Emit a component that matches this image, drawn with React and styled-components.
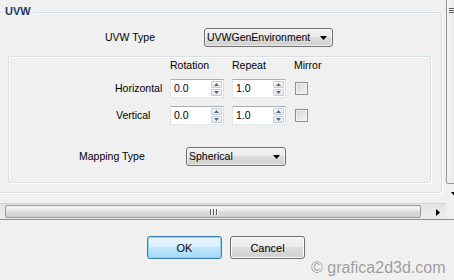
import React from "react";
import styled, { createGlobalStyle } from "styled-components";

const Global = createGlobalStyle`
  html, body { margin: 0; padding: 0; background: #f0f0f0; }
  body {
    font-family: "Liberation Sans", Arial, sans-serif;
    font-size: 10.5px;
    color: #000;
  }
  * { box-sizing: border-box; }
`;

const Window = styled.div`
  position: relative;
  width: 454px;
  height: 280px;
  overflow: hidden;
  background: #f0f0f0;
  display: flex;
  flex-direction: column;
`;

const ScrollPanel = styled.div`
  display: flex;
  flex-direction: column;
  height: 220px;
  border-bottom: 1px solid #8e8e8e;
`;

const Viewport = styled.div`
  display: flex;
  height: 203px;
`;

const Content = styled.div`
  flex: none;
  width: 446px;
  padding-top: 12px;
  overflow: hidden;
`;

const Group = styled.div`
  position: relative;
  margin-left: -4px;
  width: 446px;
  border: 1px solid #d5dfe5;
  border-radius: 3px;
  box-shadow: inset 1px 1px 0 #fff, 1px 1px 0 #fff;
  padding: 15px 10px 9px 11px;
`;

const GroupTitle = styled.span`
  position: absolute;
  top: -8px;
  left: 7px;
  padding: 0 3px 0 1px;
  background: #f0f0f0;
  font-weight: bold;
  font-size: 11px;
  line-height: 13px;
  color: #1d3a6e;
`;

const FieldRow = styled.div`
  display: grid;
  grid-template-columns: ${(p) => p.$labelWidth}px auto;
  justify-items: start;
  align-items: center;
  height: 19px;
  padding-left: ${(p) => p.$indent}px;
  margin-top: ${(p) => p.$top || 0}px;
`;

const Label = styled.span`
  line-height: 13px;
  white-space: nowrap;
`;

const Select = styled.div`
  display: flex;
  align-items: center;
  justify-content: space-between;
  width: ${(p) => p.$width}px;
  height: 19px;
  padding: 0 5px 0 2px;
  border: 1px solid #707070;
  border-radius: 3px;
  background: linear-gradient(#f2f2f2, #ebebeb 50%, #dddddd 50%, #cfcfcf);
  box-shadow: inset 0 0 0 1px rgba(255, 255, 255, 0.6);
  line-height: 17px;
  white-space: nowrap;
`;

const Frame = styled.div`
  margin-top: 9px;
  border: 1px solid #d5dfe5;
  border-radius: 3px;
  box-shadow: inset 1px 1px 0 #fff, 1px 1px 0 #fff;
  padding: 3px 0 16px 0;
`;

const AxisGrid = styled.div`
  display: grid;
  grid-template-columns: 153px 54px 54px auto;
  grid-template-rows: 11px 19px 19px;
  column-gap: 8px;
  row-gap: 8px;
  align-items: center;
  justify-items: start;
`;

const ColumnHead = styled.span`
  line-height: 13px;
  white-space: nowrap;
`;

const AxisLabel = styled.span`
  padding-left: ${(p) => p.$indent}px;
  line-height: 13px;
`;

const Spin = styled.div`
  display: flex;
  align-items: stretch;
  justify-content: space-between;
  width: 54px;
  height: 19px;
  padding: 1px 1px 1px 3px;
  background: #fff;
  border: 1px solid;
  border-color: #abadb3 #dbdfe6 #e3e9ef #e2e3ea;
`;

const SpinValue = styled.span`
  align-self: center;
  line-height: 13px;
`;

const SpinButtons = styled.div`
  display: flex;
  flex-direction: column;
  gap: 1px;
  width: 11px;
`;

const SpinButton = styled.div`
  flex: 1;
  display: flex;
  align-items: center;
  justify-content: center;
  border: 1px solid #c9cdd3;
  border-radius: 1px;
  background: linear-gradient(#f7f7f7, #e3e5e8);
`;

const Check = styled.div`
  width: 13px;
  height: 13px;
  margin-left: 1px;
  border: 1px solid #8f8f8f;
  background: linear-gradient(135deg, #cfd1d4, #f7f7f7);
  box-shadow: inset 0 0 0 1px #f2f2f2;
`;

const VScroll = styled.div`
  flex: none;
  width: 17px;
  display: flex;
  flex-direction: column;
`;

const VThumb = styled.div`
  flex: 1;
  border: 1px solid #979797;
  border-top: none;
  border-radius: 0 0 2px 2px;
  background: linear-gradient(90deg, #f5f5f5, #e9e9e9 45%, #dcdcdc 50%, #d0d0d0);
  padding: 8px 0 0 2px;
`;

const GripLine = styled.div`
  width: 9px;
  height: 1px;
  margin-bottom: 1px;
  background: #5a5a5a;
  box-shadow: 0 1px 0 #fafafa;
`;

const ArrowButton = styled.div`
  flex: none;
  width: 17px;
  height: ${(p) => p.$height || 17}px;
  display: flex;
  align-items: center;
  justify-content: center;
`;

const HScroll = styled.div`
  display: flex;
  height: 16px;
`;

const HTrack = styled.div`
  flex: none;
  width: 446px;
  display: flex;
  padding: 1px 0 1px 5px;
  border-top: 1px solid #d2d2d2;
  background: linear-gradient(#e4e4e4, #ececec);
`;

const HThumb = styled.div`
  width: 416px;
  display: flex;
  align-items: center;
  justify-content: center;
  gap: 2px;
  border: 1px solid #979797;
  border-radius: 2px;
  background: linear-gradient(#f6f6f6, #eaeaea 45%, #dcdcdc 50%, #d2d2d2);
`;

const GripBar = styled.div`
  width: 1px;
  height: 6px;
  background: #5a5a5a;
  box-shadow: 1px 0 0 #fafafa;
`;

const Spacer = styled.div`
  flex: 1;
`;

const ButtonRow = styled.div`
  display: flex;
  gap: 8px;
  padding: 16px 0 0 147px;
`;

const Button = styled.div`
  width: 75px;
  height: 23px;
  display: flex;
  align-items: center;
  justify-content: center;
  border: 1px solid ${(p) => (p.$default ? "#3c7fb1" : "#707070")};
  border-radius: 3px;
  background: ${(p) =>
    p.$default
      ? "linear-gradient(#eaf6fd, #d9f0fc 50%, #bee6fd 50%, #a7d9f5)"
      : "linear-gradient(#f2f2f2, #ebebeb 50%, #dddddd 50%, #cfcfcf)"};
  box-shadow: inset 0 0 0 1px ${(p) => (p.$default ? "#8fd3f5" : "#fbfbfb")};
  font-size: 11px;
`;

const Watermark = styled.div`
  position: absolute;
  left: 311px;
  top: 259px;
  font-size: 16px;
  line-height: 18px;
  color: #9c9c9c;
  text-shadow: 0 0 1px #fff;
  white-space: nowrap;
`;

const Tri = ({ dir, color = "#000", w = 7, h = 4 }) => {
  let d;
  if (dir === "down") d = `M0 0H${w}L${w / 2} ${h}Z`;
  else if (dir === "up") d = `M0 ${h}H${w}L${w / 2} 0Z`;
  else d = `M0 0V${w}L${h} ${w / 2}Z`;
  const vw = dir === "right" ? h : w;
  const vh = dir === "right" ? w : h;
  return (
    <svg width={vw} height={vh} viewBox={`0 0 ${vw} ${vh}`}>
      <path d={d} fill={color} />
    </svg>
  );
};

const SpinBox = ({ value }) => (
  <Spin>
    <SpinValue>{value}</SpinValue>
    <SpinButtons>
      <SpinButton>
        <Tri dir="up" color="#4b6a9a" w={5} h={3} />
      </SpinButton>
      <SpinButton>
        <Tri dir="down" color="#4b6a9a" w={5} h={3} />
      </SpinButton>
    </SpinButtons>
  </Spin>
);

const Dropdown = ({ value, width }) => (
  <Select $width={width}>
    <span>{value}</span>
    <Tri dir="down" />
  </Select>
);

export default function App() {
  return (
    <>
      <Global />
      <Window>
        <ScrollPanel>
          <Viewport>
            <Content>
              <Group>
                <GroupTitle>UVW</GroupTitle>
                <FieldRow $indent={97} $labelWidth={99}>
                  <Label>UVW Type</Label>
                  <Dropdown value="UVWGenEnvironment" width={129} />
                </FieldRow>
                <Frame>
                  <AxisGrid>
                    <span />
                    <ColumnHead>Rotation</ColumnHead>
                    <ColumnHead>Repeat</ColumnHead>
                    <ColumnHead>Mirror</ColumnHead>

                    <AxisLabel $indent={106}>Horizontal</AxisLabel>
                    <SpinBox value="0.0" />
                    <SpinBox value="1.0" />
                    <Check />

                    <AxisLabel $indent={107}>Vertical</AxisLabel>
                    <SpinBox value="0.0" />
                    <SpinBox value="1.0" />
                    <Check />
                  </AxisGrid>
                  <FieldRow $indent={70} $labelWidth={107} $top={22}>
                    <Label>Mapping Type</Label>
                    <Dropdown value="Spherical" width={100} />
                  </FieldRow>
                </Frame>
              </Group>
            </Content>
            <VScroll>
              <VThumb>
                <GripLine />
                <GripLine />
                <GripLine />
              </VThumb>
              <ArrowButton $height={19}>
                <Tri dir="down" w={7} h={4} />
              </ArrowButton>
            </VScroll>
          </Viewport>
          <HScroll>
            <HTrack>
              <HThumb>
                <GripBar />
                <GripBar />
                <GripBar />
              </HThumb>
              <Spacer />
              <ArrowButton $height={14}>
                <Tri dir="right" w={7} h={4} />
              </ArrowButton>
            </HTrack>
          </HScroll>
        </ScrollPanel>
        <ButtonRow>
          <Button $default>OK</Button>
          <Button>Cancel</Button>
        </ButtonRow>
        <Watermark>© grafica2d3d.com</Watermark>
      </Window>
    </>
  );
}
